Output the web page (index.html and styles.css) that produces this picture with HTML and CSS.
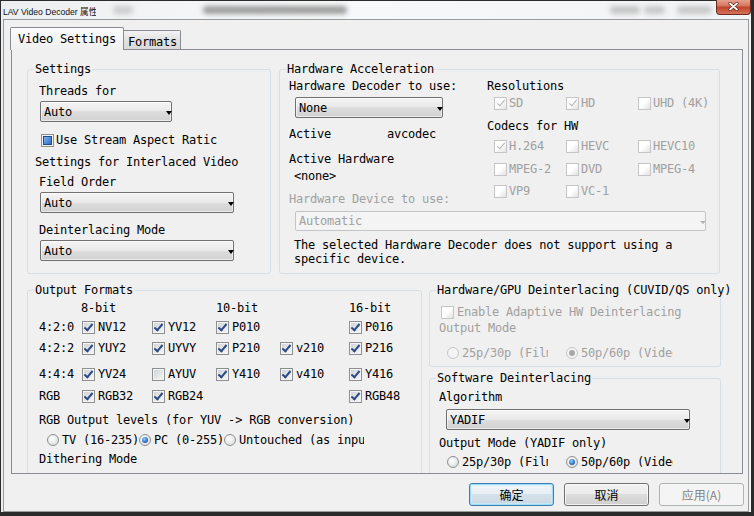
FILE: index.html
```html
<!DOCTYPE html>
<html>
<head>
<meta charset="utf-8">
<title>LAV Video Decoder 属性</title>
<link rel="stylesheet" href="styles.css">
</head>
<body>
<div class="window">
  <div class="titlebar">
    <span class="title">LAV Video Decoder 属性</span>
    <span class="blob blob1"></span>
    <span class="blob blob2"></span>
    <span class="blob blob3"></span>
    <span class="blob blob4"></span>
    <span class="blob blob5"></span>
    <span class="close"><svg width="11" height="9" viewBox="0 0 11 9"><path d="M2 1.5 L9 7.5 M9 1.5 L2 7.5" stroke="#5a2418" stroke-width="3.2" stroke-linecap="round"/><path d="M2 1.5 L9 7.5 M9 1.5 L2 7.5" stroke="#fff" stroke-width="1.8" stroke-linecap="round"/></svg></span>
  </div>
  <div class="client ui">
    <div class="tabs">
      <div class="tab active">Video Settings</div>
      <div class="tab inactive">Formats</div>
    </div>
    <div class="panel">
      <div class="row-top">
        <fieldset class="group g-settings">
          <legend>Settings</legend>
          <div class="lbl s-threads">Threads for</div>
          <div class="combo s-combo1">Auto<span class="arrow"></span></div>
          <div class="ck s-aspect"><span class="cb fill"></span>Use Stream Aspect Ratic</div>
          <div class="lbl s-inter">Settings for Interlaced Video</div>
          <div class="lbl s-field">Field Order</div>
          <div class="combo s-combo2">Auto<span class="arrow"></span></div>
          <div class="lbl s-deint">Deinterlacing Mode</div>
          <div class="combo s-combo2">Auto<span class="arrow"></span></div>
        </fieldset>
        <fieldset class="group g-hw">
          <legend>Hardware Acceleration</legend>
          <div class="hw-top">
            <div class="hw-left">
              <div class="lbl h-dec">Hardware Decoder to use:</div>
              <div class="combo h-combo">None<span class="arrow"></span></div>
              <div class="h-active"><span class="h-key">Active</span><span>avcodec</span></div>
              <div class="lbl h-acthw">Active Hardware</div>
              <div class="lbl h-none">&lt;none&gt;</div>
              <div class="lbl h-dev dis">Hardware Device to use:</div>
            </div>
            <div class="hw-right">
              <div class="lbl h-res">Resolutions</div>
              <div class="hgrid h-r1">
                <div class="ck dis"><span class="cb on"></span>SD</div>
                <div class="ck dis"><span class="cb on"></span>HD</div>
                <div class="ck dis"><span class="cb"></span>UHD (4K)</div>
              </div>
              <div class="lbl h-codecs">Codecs for HW</div>
              <div class="hgrid h-r2">
                <div class="ck dis"><span class="cb on"></span>H.264</div>
                <div class="ck dis"><span class="cb"></span>HEVC</div>
                <div class="ck dis"><span class="cb"></span>HEVC10</div>
              </div>
              <div class="hgrid h-r3">
                <div class="ck dis"><span class="cb"></span>MPEG-2</div>
                <div class="ck dis"><span class="cb"></span>DVD</div>
                <div class="ck dis"><span class="cb"></span>MPEG-4</div>
              </div>
              <div class="hgrid h-r4">
                <div class="ck dis"><span class="cb"></span>VP9</div>
                <div class="ck dis"><span class="cb"></span>VC-1</div>
              </div>
            </div>
          </div>
          <div class="combo dcombo h-devcombo">Automatic<span class="arrow"></span></div>
          <div class="h-desc">The selected Hardware Decoder does not support using a<br>specific device.</div>
        </fieldset>
      </div>
      <div class="row-bottom">
        <fieldset class="group g-out">
          <legend>Output Formats</legend>
          <div class="ofrow o-head"><span></span><span class="o-h8">8-bit</span><span></span><span>10-bit</span><span></span><span>16-bit</span></div>
          <div class="ofrow o-r1">
            <span>4:2:0</span>
            <div class="ck"><span class="cb on"></span>NV12</div>
            <div class="ck"><span class="cb on"></span>YV12</div>
            <div class="ck"><span class="cb on"></span>P010</div>
            <span></span>
            <div class="ck"><span class="cb on"></span>P016</div>
          </div>
          <div class="ofrow o-r2">
            <span>4:2:2</span>
            <div class="ck"><span class="cb on"></span>YUY2</div>
            <div class="ck"><span class="cb on"></span>UYVY</div>
            <div class="ck"><span class="cb on"></span>P210</div>
            <div class="ck"><span class="cb on"></span>v210</div>
            <div class="ck"><span class="cb on"></span>P216</div>
          </div>
          <div class="ofrow o-r3">
            <span>4:4:4</span>
            <div class="ck"><span class="cb on"></span>YV24</div>
            <div class="ck"><span class="cb"></span>AYUV</div>
            <div class="ck"><span class="cb on"></span>Y410</div>
            <div class="ck"><span class="cb on"></span>v410</div>
            <div class="ck"><span class="cb on"></span>Y416</div>
          </div>
          <div class="ofrow o-r4">
            <span>RGB</span>
            <div class="ck"><span class="cb on"></span>RGB32</div>
            <div class="ck"><span class="cb on"></span>RGB24</div>
            <span></span>
            <span></span>
            <div class="ck"><span class="cb on"></span>RGB48</div>
          </div>
          <div class="lbl o-levels">RGB Output levels (for YUV -&gt; RGB conversion)</div>
          <div class="radios o-radios">
            <div class="ri w-tv"><span class="rb"></span>TV (16-235)</div>
            <div class="ri w-pc"><span class="rb on"></span>PC (0-255)</div>
            <div class="ri w-un"><span class="rb"></span>Untouched (as input)</div>
          </div>
          <div class="lbl o-dither">Dithering Mode</div>
        </fieldset>
        <div class="rcol">
          <fieldset class="group g-gpu">
            <legend>Hardware/GPU Deinterlacing (CUVID/QS only)</legend>
            <div class="ck dis g-enable"><span class="cb"></span>Enable Adaptive HW Deinterlacing</div>
            <div class="lbl dis g-mode">Output Mode</div>
            <div class="radios dis g-radios">
              <div class="ri w-25"><span class="rb"></span>25p/30p (Film)</div>
              <div class="ri w-50"><span class="rb on"></span>50p/60p (Video)</div>
            </div>
          </fieldset>
          <fieldset class="group g-sw">
            <legend>Software Deinterlacing</legend>
            <div class="lbl w-algo">Algorithm</div>
            <div class="combo w-combo">YADIF<span class="arrow"></span></div>
            <div class="lbl w-mode">Output Mode (YADIF only)</div>
            <div class="radios w-radios">
              <div class="ri w-25"><span class="rb"></span>25p/30p (Film)</div>
              <div class="ri w-50"><span class="rb on"></span>50p/60p (Video)</div>
            </div>
          </fieldset>
        </div>
      </div>
    </div>
    <div class="buttons">
      <button class="btn default">确定</button>
      <button class="btn">取消</button>
      <button class="btn disabled">应用(A)</button>
    </div>
  </div>
</div>
</body>
</html>
```

FILE: styles.css
```css
* { box-sizing: border-box; }
html, body { margin: 0; padding: 0; }
body { width: 754px; height: 516px; overflow: hidden; background: #1e1e1e; }

.window {
  width: 754px; height: 516px;
  display: flex; flex-direction: column;
  border-style: solid; border-color: #2b2b2b;
  border-width: 1px 3px 4px 1px;
  padding: 0 2px;
  background: linear-gradient(90deg, #eceef0, #f8f9fa 40%, #f1f3f5);
}

.titlebar { height: 18px; flex: none; display: flex; align-items: center; }
.title {
  font-family: "Liberation Sans", "Noto Sans CJK SC", sans-serif;
  font-size: 8.6px; color: #111; white-space: nowrap;
  margin-top: 1px; width: 93px; flex: none; overflow: hidden;
}
.blob { height: 8px; border-radius: 4px; filter: blur(2.5px); flex: none; }
.blob1 { width: 20px; margin-left: 17px; background: #cdcdcd; }
.blob2 { width: 144px; margin-left: 70px; background: #9c9c9c; }
.blob3 { width: 30px; margin-left: 263px; background: #c4c4c4; }
.blob4 { width: 21px; margin-left: 4px; background: #c8c8c8; }
.blob5 { width: 35px; margin-left: 12px; background: #c8c8c8; }
.close {
  margin-left: auto; margin-right: -2px; margin-top: -2px; align-self: flex-start;
  width: 35px; height: 16px; flex: none;
  display: flex; align-items: center; justify-content: center;
  border: 1px solid #6d2a1e; border-top: none;
  border-radius: 0 0 4px 4px;
  background: linear-gradient(#e9a797, #d47760 45%, #c2432a 55%, #d5745a);
}

.client {
  flex: 1; display: flex; flex-direction: column;
  border: 1px solid #9a9a9a;
  background: #f0f0f0;
}
.ui {
  font-family: "DejaVu Sans Mono", "Liberation Mono", monospace;
  font-size: 12px; letter-spacing: -0.22px; line-height: 14px; color: #000;
}

/* tabs */
.tabs { display: flex; align-items: flex-end; height: 22px; margin-top: 7px; padding-left: 6px; flex: none; }
.tab { border: 1px solid #898c95; border-bottom: none; white-space: nowrap; flex: none; }
.tab.active {
  position: relative; z-index: 1;
  width: 114px; height: 23px; margin-bottom: -1px;
  padding: 4px 0 0 7px;
  background: linear-gradient(#fbfbfb, #f0f0f0);
  border-radius: 2px 2px 0 0;
}
.tab.inactive {
  width: 57px; height: 19px; border-left: none;
  padding: 4px 0 0 4px;
  background: linear-gradient(#f3f3f3, #e2e2e2 50%, #d9d9d9);
  border-radius: 0 2px 0 0;
}

.panel {
  height: 425px; flex: none;
  margin: 0 5px 0 7px;
  border: 1px solid #898c95;
  background: #f0f0f0;
  padding-left: 15px;
  overflow: hidden;
}

/* group boxes */
.group {
  margin: 0; padding: 0; min-width: 0;
  border: 1px solid #d5dfe5; border-radius: 3px;
  flex: none;
}
.group legend { padding: 0 1px; margin-left: 6px; line-height: 14px; white-space: nowrap; }
.row-top { display: flex; gap: 8px; margin-top: 12px; }
.row-bottom { display: flex; gap: 7px; margin-top: 9px; align-items: flex-start; }
.g-settings { width: 244px; height: 212px; }
.g-hw { width: 441px; height: 212px; }
.g-out { width: 395px; height: 200px; }
.rcol { width: 292px; display: flex; flex-direction: column; gap: 4px; flex: none; }
.g-gpu { width: 292px; height: 84px; }
.g-sw { width: 292px; height: 120px; }

.lbl { height: 14px; white-space: nowrap; }
.dis { color: #a0a0a0; }

/* combos */
.combo {
  display: flex; align-items: center; height: 21px;
  border: 1px solid #707070; border-radius: 2px;
  padding-left: 3px; white-space: nowrap;
  background: linear-gradient(#f4f4f4, #e9e9e9 50%, #dddddd 50%, #d2d2d2);
  box-shadow: inset 0 0 0 1px rgba(255,255,255,.55);
}
.arrow {
  margin-left: auto; margin-right: -1px; margin-top: 2px;
  width: 0; height: 0;
  border-left: 3px solid transparent; border-right: 3px solid transparent;
  border-top: 4px solid #000;
}
.dcombo {
  border-color: #c2c5c8; color: #a0a0a0; height: 20px;
  background: #f4f4f4; box-shadow: none;
}
.dcombo .arrow { border-top-color: #b0b0b0; border-top-width: 3px; }

/* checkboxes */
.ck { display: flex; align-items: center; gap: 3px; height: 14px; white-space: nowrap; }
.cb {
  width: 13px; height: 13px; flex: none;
  display: flex; align-items: center; justify-content: center;
  border: 1px solid #8e8f8f;
  background: linear-gradient(135deg, #cdd1d6, #f7f7f7);
  box-shadow: inset 0 0 0 1px #f4f4f4;
}
.cb.on::after {
  content: ""; width: 3px; height: 7px; margin-top: -2px;
  border: solid #2c4a86; border-width: 0 2px 2px 0;
  transform: rotate(40deg);
}
.cb.fill::after {
  content: ""; width: 7px; height: 7px;
  border: 1px solid #1c4d96;
  background: linear-gradient(135deg, #7fb3ee, #2d6cc4);
}
.dis .cb {
  border-color: #c6c6c6;
  background: linear-gradient(135deg, #ffffff 45%, #e2e2e2);
  box-shadow: none;
}
.dis .cb.on::after { border-color: #b2b2b2; border-width: 0 1px 1px 0; }

/* radios */
.radios { display: flex; height: 14px; align-items: center; }
.ri { display: flex; align-items: center; gap: 3px; overflow: hidden; white-space: nowrap; flex: none; height: 14px; }
.rb {
  width: 12px; height: 12px; border-radius: 50%; flex: none;
  display: flex; align-items: center; justify-content: center;
  border: 1px solid #8e8f8f;
  background: radial-gradient(circle at 40% 35%, #ffffff, #d4d6d9);
}
.rb.on::after {
  content: ""; width: 6px; height: 6px; border-radius: 50%;
  background: radial-gradient(circle at 40% 35%, #8fd0ff, #1f5fb0 70%, #153f7a);
}
.dis .rb { border-color: #c6c6c6; background: #f4f4f4; }
.dis .rb.on::after { background: #a8a8a8; }

/* settings group */
.s-threads { margin: 8px 0 0 11px; }
.s-combo1 { width: 132px; margin: 3px 0 0 12px; }
.s-aspect { margin: 11px 0 0 13px; gap: 2px; }
.s-inter { margin: 8px 0 0 7px; }
.s-field { margin: 6px 0 0 11px; }
.s-combo2 { width: 194px; margin: 3px 0 0 12px; }
.s-deint { margin: 10px 0 0 11px; }
.s-deint + .s-combo2 { margin-top: 3px; }

/* hardware group */
.hw-top { display: flex; height: 130px; }
.hw-left { width: 207px; padding-left: 9px; flex: none; }
.hw-right { flex: 1; }
.h-dec { margin-top: 3px; }
.h-combo { width: 148px; margin: 4px 0 0 6px; }
.h-active { display: flex; height: 14px; margin-top: 9px; }
.h-key { width: 98px; flex: none; }
.h-acthw { margin-top: 11px; }
.h-none { margin: 3px 0 0 5px; }
.h-dev { margin-top: 9px; }
.h-res { margin-top: 3px; }
.hgrid { display: grid; grid-template-columns: 72px 72px 72px; margin-left: 7px; height: 14px; }
.hgrid .ck { gap: 2px; }
.h-r1 { margin-top: 3px; }
.h-codecs { margin-top: 9px; }
.h-r2 { margin-top: 6px; }
.h-r3 { margin-top: 9px; }
.h-r4 { margin-top: 8px; }
.h-devcombo { width: 411px; margin: 5px 0 0 15px; }
.h-desc { margin: 7px 0 0 14px; white-space: nowrap; }

/* output formats */
.ofrow {
  display: grid; grid-template-columns: 43px 70px 64px 64px 69px auto;
  margin-left: 11px; height: 16px; align-items: center; white-space: nowrap;
}
.o-head { height: 14px; margin-top: 4px; }
.o-h8 { margin-left: -1px; }
.o-r1 { margin-top: 4px; }
.o-r2 { margin-top: 5px; }
.o-r3 { margin-top: 10px; }
.o-r4 { margin-top: 6px; }
.o-levels { margin: 9px 0 0 11px; }
.o-radios { margin: 6px 0 0 19px; }
.w-tv { width: 90px; margin-right: 2px; }
.w-pc { width: 84px; margin-right: 1px; }
.w-un { width: 140px; }
.o-dither { margin: 5px 0 0 11px; }

/* gpu deinterlacing */
.g-enable { margin: 8px 0 0 11px; }
.g-mode { margin: 2px 0 0 9px; }
.g-radios { margin: 11px 0 0 17px; }
.w-25 { width: 101px; margin-right: 18px; }
.w-50 { width: 107px; }

/* software deinterlacing */
.w-algo { margin: 5px 0 0 9px; }
.w-combo { width: 244px; margin: 5px 0 0 16px; }
.w-mode { margin: 6px 0 0 9px; }
.w-radios { margin: 5px 0 0 17px; }

/* buttons */
.buttons { display: flex; justify-content: flex-end; gap: 10px; margin-top: 9px; padding-right: 4px; flex: none; }
.btn {
  width: 85px; height: 23px; padding: 0;
  font-family: "Noto Sans CJK SC", "DejaVu Sans", sans-serif; font-size: 12px; color: #000;
  border: 1px solid #707070; border-radius: 3px;
  background: linear-gradient(#f2f2f2, #ebebeb 50%, #dddddd 50%, #cfcfcf);
  box-shadow: inset 0 0 0 1px rgba(255,255,255,.7);
}
.btn.default {
  border-color: #3c7fb1;
  box-shadow: inset 0 0 0 1px #9fdcf8, inset 0 0 0 2px rgba(200,238,252,.6);
  background: linear-gradient(#f0f6fa, #e6eef3 50%, #d6e2ea 50%, #cad8e2);
}
.btn.disabled {
  border-color: #adb2b5; color: #838383;
  background: #f4f4f4; box-shadow: none;
}
```
